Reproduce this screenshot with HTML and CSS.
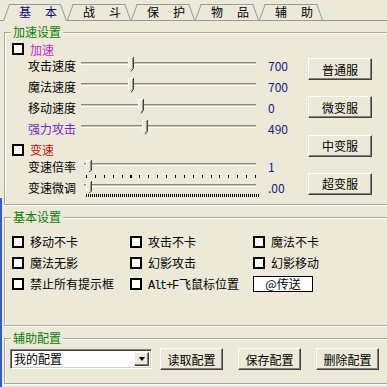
FILE: index.html
```html
<!DOCTYPE html>
<html lang="zh">
<head>
<meta charset="utf-8">
<link rel="stylesheet" href="styles.css">
</head>
<body>
<div class="frame-left"></div>
<div class="tabs">
  <div class="tab active"><span>基　本</span></div>
  <div class="tab"><span>战　斗</span></div>
  <div class="tab"><span>保　护</span></div>
  <div class="tab"><span>物　品</span></div>
  <div class="tab"><span>辅　助</span></div>
</div>

<fieldset class="grp grp-speed">
  <legend>加速设置</legend>
  <div class="speed">
    <div class="speed-left">
      <div class="cbrow"><span class="cb"></span><span class="c-mag">加速</span></div>

      <div class="srow"><span class="slabel">攻击速度</span>
        <div class="slider"><span class="track"></span>
          <svg class="thumb" style="left:47px" width="6" height="15" viewBox="0 0 6 15"><path d="M0 0H6V11L3 14.5L0 11Z" fill="#ECE9D8"/><path d="M0.5 11V0.5H5" fill="none" stroke="#fff"/><path d="M5.5 0V11.2L3 14.5" fill="none" stroke="#404040"/><path d="M4.5 1V10.8L3 12.8" fill="none" stroke="#9c9a8c"/></svg>
        </div>
        <span class="val">700</span></div>

      <div class="srow"><span class="slabel">魔法速度</span>
        <div class="slider"><span class="track"></span>
          <svg class="thumb" style="left:47px" width="6" height="15" viewBox="0 0 6 15"><path d="M0 0H6V11L3 14.5L0 11Z" fill="#ECE9D8"/><path d="M0.5 11V0.5H5" fill="none" stroke="#fff"/><path d="M5.5 0V11.2L3 14.5" fill="none" stroke="#404040"/><path d="M4.5 1V10.8L3 12.8" fill="none" stroke="#9c9a8c"/></svg>
        </div>
        <span class="val">700</span></div>

      <div class="srow"><span class="slabel">移动速度</span>
        <div class="slider"><span class="track"></span>
          <svg class="thumb" style="left:57px" width="6" height="15" viewBox="0 0 6 15"><path d="M0 0H6V11L3 14.5L0 11Z" fill="#ECE9D8"/><path d="M0.5 11V0.5H5" fill="none" stroke="#fff"/><path d="M5.5 0V11.2L3 14.5" fill="none" stroke="#404040"/><path d="M4.5 1V10.8L3 12.8" fill="none" stroke="#9c9a8c"/></svg>
        </div>
        <span class="val">0</span></div>

      <div class="srow"><span class="slabel c-purple">强力攻击</span>
        <div class="slider"><span class="track"></span>
          <svg class="thumb" style="left:61px" width="6" height="15" viewBox="0 0 6 15"><path d="M0 0H6V11L3 14.5L0 11Z" fill="#ECE9D8"/><path d="M0.5 11V0.5H5" fill="none" stroke="#fff"/><path d="M5.5 0V11.2L3 14.5" fill="none" stroke="#404040"/><path d="M4.5 1V10.8L3 12.8" fill="none" stroke="#9c9a8c"/></svg>
        </div>
        <span class="val">490</span></div>

      <div class="cbrow cbrow-2"><span class="cb"></span><span class="c-red">变速</span></div>

      <div class="srow tk"><span class="slabel">变速倍率</span>
        <div class="slider"><span class="track"></span><span class="ticks"></span>
          <svg class="thumb" style="left:5px" width="6" height="12" viewBox="0 0 6 12"><path d="M0 0H6V10L3 12L0 10Z" fill="#ECE9D8"/><path d="M0.5 10V0.5H5" fill="none" stroke="#fff"/><path d="M5.5 0V10.2L3 12" fill="none" stroke="#404040"/><path d="M4.5 1V10" fill="none" stroke="#9c9a8c"/></svg>
        </div>
        <span class="val">1</span></div>

      <div class="srow tk"><span class="slabel">变速微调</span>
        <div class="slider"><span class="track"></span><span class="ticks dense"></span>
          <svg class="thumb" style="left:5px" width="6" height="12" viewBox="0 0 6 12"><path d="M0 0H6V10L3 12L0 10Z" fill="#ECE9D8"/><path d="M0.5 10V0.5H5" fill="none" stroke="#fff"/><path d="M5.5 0V10.2L3 12" fill="none" stroke="#404040"/><path d="M4.5 1V10" fill="none" stroke="#9c9a8c"/></svg>
        </div>
        <span class="val">.00</span></div>
    </div>

    <div class="speed-btns">
      <button class="btn">普通服</button>
      <button class="btn">微变服</button>
      <button class="btn">中变服</button>
      <button class="btn">超变服</button>
    </div>
  </div>
</fieldset>

<fieldset class="grp grp-basic">
  <legend>基本设置</legend>
  <div class="basic">
    <div class="chk"><span class="cb"></span>移动不卡</div>
    <div class="chk"><span class="cb"></span>攻击不卡</div>
    <div class="chk"><span class="cb"></span>魔法不卡</div>
    <div class="chk"><span class="cb"></span>魔法无影</div>
    <div class="chk"><span class="cb"></span>幻影攻击</div>
    <div class="chk"><span class="cb"></span>幻影移动</div>
    <div class="chk"><span class="cb"></span>禁止所有提示框</div>
    <div class="chk"><span class="cb"></span><span><span class="mono">Alt+F</span>飞鼠标位置</span></div>
    <div class="chk"><span class="sendbox">@传送</span></div>
  </div>
</fieldset>

<fieldset class="grp grp-cfg">
  <legend>辅助配置</legend>
  <div class="cfg">
    <div class="combo"><span class="combo-text">我的配置</span><span class="dd"></span></div>
    <button class="btn btn-cfg">读取配置</button>
    <button class="btn btn-cfg">保存配置</button>
    <button class="btn btn-cfg">删除配置</button>
  </div>
</fieldset>
</body>
</html>
```

FILE: styles.css
```css
* { box-sizing: border-box; }
html, body { margin: 0; padding: 0; }
body {
  position: relative;
  width: 387px;
  height: 387px;
  overflow: hidden;
  background: #ECE9D8;
  font-family: "Noto Sans CJK SC", "Noto Sans", sans-serif;
  font-size: 12px;
  color: #000;
}
.frame-left {
  position: absolute;
  left: 0;
  top: 198px;
  bottom: 0;
  width: 2px;
  background: #2E5FC9;
}

/* tabs */
.tabs {
  display: flex;
  align-items: flex-end;
  height: 21px;
  padding-left: 3px;
  border-bottom: 1px solid #919B9C;
}
.tab {
  position: relative;
  width: 64px;
  height: 16px;
  line-height: 16px;
  padding-left: 16px;
  letter-spacing: 1px;
  white-space: nowrap;
  flex: none;
}
.tab span { position: relative; z-index: 2; }
.tab::before, .tab::after {
  content: "";
  position: absolute;
  top: 0;
  bottom: 0;
  width: 50%;
  border-top: 1px solid #919B9C;
  transform-origin: bottom;
}
.tab::before { left: 0; border-left: 1px solid #919B9C; transform: skewX(-20deg); }
.tab::after { right: 0; border-right: 1px solid #919B9C; transform: skewX(20deg); }
.tab.active {
  z-index: 1;
  height: 17px;
  margin-bottom: -1px;
  color: #0A0A80;
}
.tab.active::before, .tab.active::after { background: #ECE9D8; }

/* group boxes */
.grp {
  margin: 0 0 0 4px;
  padding: 0 0 0 6px;
  min-width: 0;
  border: 1px solid #ACA899;
  border-right: none;
  box-shadow: inset 1px 1px #fff, 0 1px #fff;
}
.grp legend {
  padding: 0 2px;
  line-height: 14px;
  color: #0B7F0B;
  background: #ECE9D8;
}
.grp-speed { margin-top: 4px; padding-bottom: 3px; }
.grp-basic { margin-top: 5px; }
.grp-cfg { margin-top: 5px; padding-bottom: 13px; }

/* speed group */
.speed { display: flex; }
.speed-left { width: 297px; flex: none; }
.speed-btns {
  display: flex;
  flex-direction: column;
  gap: 16.3px;
  padding-top: 19px;
}

.cbrow {
  display: flex;
  align-items: center;
  gap: 6px;
  height: 14px;
  margin-top: 3px;
  padding-left: 1px;
}
.cbrow-2 { height: 19px; margin-top: 0; }
.cb {
  width: 12px;
  height: 12px;
  flex: none;
  border: 2px solid #000;
  background: #fff;
}
.c-mag { color: #D21ED2; }
.c-red { color: #D01010; }
.c-purple { color: #7A24C8; }

.srow {
  display: flex;
  height: 21px;
  padding-left: 17px;
}
.slabel {
  width: 48px;
  flex: none;
  line-height: 14px;
  padding-top: 3px;
  white-space: nowrap;
}
.slider {
  position: relative;
  width: 175px;
  height: 21px;
  margin-left: 5px;
  flex: none;
}
.track {
  display: block;
  height: 3px;
  margin-top: 6px;
  border-top: 1px solid #8C8A7C;
  border-bottom: 1px solid #fff;
  background: #C9C6B6;
}
.thumb {
  position: absolute;
  top: 1px;
  display: block;
}
.val {
  margin-left: 12px;
  line-height: 14px;
  padding-top: 3px;
  color: #1A1A8C;
}
.srow.tk .slabel, .srow.tk .val { padding-top: 1px; }
.srow.tk .track { margin-top: 4px; margin-left: 3px; }
.ticks {
  display: block;
  width: 170px;
  height: 3px;
  margin-top: 9px;
  margin-left: 5px;
  background: repeating-linear-gradient(to right, #000 0 1px, transparent 1px 8.9px);
}
.ticks.dense {
  width: 174px;
  margin-top: 7px;
  background: repeating-linear-gradient(to right, #000 0 1px, transparent 1px 2px);
}

/* buttons */
.btn {
  width: 64px;
  height: 22px;
  padding: 0;
  font: inherit;
  font-size: 12px;
  color: #000;
  background: #ECE9D8;
  border: 1px solid;
  border-color: #fff #404040 #404040 #fff;
  box-shadow: inset -1px -1px #808080;
}

/* basic group */
.basic {
  display: grid;
  grid-template-columns: 118px 123px 1fr;
  grid-auto-rows: 21px;
  margin-top: 7px;
  padding-left: 1px;
  padding-bottom: 31px;
}
.chk {
  display: flex;
  align-items: center;
  gap: 6px;
  white-space: nowrap;
}
.mono {
  font-family: "Liberation Mono", monospace;
  letter-spacing: -1.2px;
  margin-right: 1px;
}
.sendbox {
  display: flex;
  align-items: center;
  justify-content: center;
  width: 60px;
  height: 16px;
  border: 1px solid #000;
  background: #fff;
}

/* config group */
.cfg {
  display: flex;
  align-items: center;
  gap: 15px;
  height: 22px;
  margin-top: 3px;
}
.combo {
  display: flex;
  align-items: center;
  width: 142px;
  height: 20px;
  margin-left: -1px;
  margin-right: -7px;
  padding: 2px;
  background: #fff;
  border: 1px solid;
  border-color: #808080 #fff #fff #808080;
  box-shadow: inset 1px 1px #404040, inset -1px -1px #D4D0C8;
  flex: none;
}
.combo-text { flex: 1; padding-left: 1px; line-height: 14px; }
.dd {
  display: flex;
  align-items: center;
  justify-content: center;
  width: 15px;
  height: 14px;
  background: #ECE9D8;
  border: 1px solid;
  border-color: #fff #404040 #404040 #fff;
  box-shadow: inset -1px -1px #808080;
}
.dd::before {
  content: "";
  border-left: 3.5px solid transparent;
  border-right: 3.5px solid transparent;
  border-top: 4px solid #000;
}
.btn-cfg { width: 63px; flex: none; }
```
